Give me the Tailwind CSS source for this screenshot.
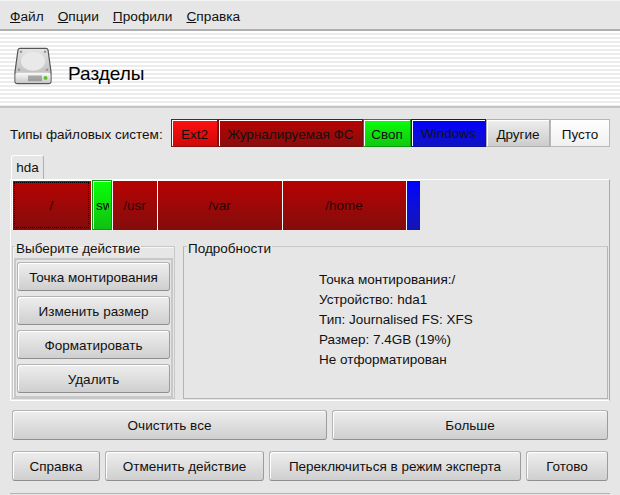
<!doctype html>
<html lang="ru">
<head>
<meta charset="UTF-8"/>
<title>Разделы</title>
<script src="https://cdn.jsdelivr.net/npm/@tailwindcss/browser@4"></script>
</head>
<body class="w-[620px] h-[495px] overflow-hidden bg-[#e6e6e6] text-[13.5px] leading-4 text-[#111] font-['Liberation_Sans',sans-serif]">

<!-- menu -->
<div class="h-[31px] pt-[3px] border-t border-t-[#f4f4f4] border-b-2 border-b-[#aeaeae] flex items-center gap-[14px] pl-[10px] text-[13.7px]">
  <span><u>Ф</u>айл</span>
  <span><u>О</u>пции</span>
  <span><u>П</u>рофили</span>
  <span><u>С</u>правка</span>
</div>

<!-- header -->
<div class="h-[77px] border-b-2 border-[#c4c4c4] flex items-center pl-[14px] bg-[repeating-linear-gradient(to_bottom,#ffffff_0,#ffffff_2px,#ececec_2px,#ececec_4px)]">
  <svg width="38" height="38" viewBox="0 0 38 40" preserveAspectRatio="none" class="mb-[5px]">
    <defs>
      <linearGradient id="hd" x1="0" y1="0" x2="0" y2="1"><stop offset="0" stop-color="#e4e4e4"/><stop offset="1" stop-color="#b4b4b4"/></linearGradient>
      <linearGradient id="fr" x1="0" y1="0" x2="0" y2="1"><stop offset="0" stop-color="#fafafa"/><stop offset="1" stop-color="#c8c8c8"/></linearGradient>
    </defs>
    <path d="M6 1.500H32Q33.500 1.500 34 3L37 26V36Q37 38.500 34.500 38.500H3.500Q1 38.500 1 36V26L4 3Q4.500 1.500 6 1.500Z" fill="url(#hd)" stroke="#555" stroke-width="1.200"/>
    <ellipse cx="19" cy="15" rx="12" ry="10" fill="#e9e9e9"/>
    <circle cx="7" cy="5" r="1.300" fill="#999"/><circle cx="31" cy="5" r="1.300" fill="#999"/>
    <circle cx="5" cy="24" r="1.300" fill="#999"/><circle cx="33" cy="24" r="1.300" fill="#999"/>
    <rect x="1.500" y="27" width="35" height="11" rx="2" fill="url(#fr)"/>
    <path d="M15 30V36M17 30V36M19 30V36M21 30V36M23 30V36M25 30V36M27 30V36" stroke="#666" stroke-width="1"/>
    <circle cx="31.500" cy="32.500" r="2" fill="#5fc02a"/>
  </svg>
  <span class="ml-[16px] mt-[10px] text-[19px] leading-6 text-black">Разделы</span>
</div>

<div class="px-[10px]">
  <!-- legend -->
  <div class="flex items-center h-[28px] mt-[11px]">
    <span class="w-[161px] shrink-0 pt-[4px]">Типы файловых систем:</span>
    <div class="flex h-[28px] text-center leading-[30px]">
      <div class="w-[47px] border border-[#8c1010] shadow-[inset_1px_1px_0_#fff] bg-linear-to-b from-[#ff1010] to-[#d00808]">Ext2</div>
      <div class="w-[145px] border border-[#701010] shadow-[inset_1px_1px_0_#fff] bg-linear-to-b from-[#b80000] to-[#8a0c0c]">Журналируемая ФС</div>
      <div class="w-[48px] border border-[#0c9a0c] shadow-[inset_1px_1px_0_#fff] bg-linear-to-b from-[#08ff08] to-[#10c810]">Своп</div>
      <div class="w-[75px] border border-[#1010a0] shadow-[inset_1px_1px_0_#fff] bg-linear-to-b from-[#0000ff] to-[#1010c4] leading-[28px]">Windows</div>
      <div class="w-[64px] border border-[#b0b0b0] shadow-[inset_1px_1px_0_#fff] bg-linear-to-b from-[#eeeeee] to-[#cccccc]">Другие</div>
      <div class="w-[60px] border border-[#b8b8b8] bg-linear-to-b from-[#ffffff] to-[#f0f0f0]">Пусто</div>
    </div>
  </div>

  <!-- tab -->
  <div class="mt-[8px] ml-px w-[33px] h-[24px] border-t border-l border-white border-r-[#b0b0b0] border-r rounded-t-[3px] text-center leading-[24px]">hda</div>

  <!-- tab panel -->
  <div class="w-[600px] h-[222px] border-t border-l border-b border-white border-r border-r-[#a8a8a8] px-px">
    <div class="flex h-[50px] w-[408px] text-center text-[#2a0505] leading-[52px]">
      <div class="w-[80px] p-[2px] border-r border-white bg-linear-to-b from-[#b80000] to-[#840c0c] shadow-[inset_1px_1px_0_#fff]">
        <div class="h-full border border-dotted border-black leading-[46px]">/</div>
      </div>
      <div class="w-[20px] border border-[#0c9a0c] shadow-[inset_1px_1px_0_#fff] bg-linear-to-b from-[#08ff08] to-[#10c010] text-black text-left pl-[3px] leading-[50px]">
        <div class="w-[13px] overflow-hidden">sw</div>
      </div>
      <div class="w-[45px] shadow-[inset_1px_1px_0_#fff] bg-linear-to-b from-[#b80000] to-[#840c0c]">/usr</div>
      <div class="w-[125px] shadow-[inset_1px_1px_0_#fff] bg-linear-to-b from-[#b80000] to-[#840c0c]">/var</div>
      <div class="w-[124px] shadow-[inset_1px_1px_0_#fff] bg-linear-to-b from-[#b80000] to-[#840c0c]">/home</div>
      <div class="w-[14px] shadow-[inset_1px_1px_0_#fff] bg-linear-to-b from-[#0000ff] to-[#1414b4]"></div>
    </div>

    <div class="flex gap-[8px] mt-[7px]">
      <!-- actions -->
      <fieldset class="w-[163px] h-[162px] border border-[#c8c8c8] shadow-[inset_1px_1px_0_#f6f6f6]">
        <legend class="ml-[2px] px-px pt-[4px] text-[13.5px] leading-[15px]">Выберите действие</legend>
        <div class="mx-px mt-[2px] h-[140px] border-2 border-[#c8c8c8] px-[1px] pt-[2px] flex flex-col gap-[5px]">
          <button class="h-[29px] pt-[2px] shrink-0 rounded-[3px] border border-[#b4b4b4] border-b-[#8e8e8e] border-r-[#9c9c9c] shadow-[inset_1px_1px_0_#fff] bg-linear-to-b from-[#eeeeee] to-[#cfcfcf]">Точка монтирования</button>
          <button class="h-[29px] pt-[2px] shrink-0 rounded-[3px] border border-[#b4b4b4] border-b-[#8e8e8e] border-r-[#9c9c9c] shadow-[inset_1px_1px_0_#fff] bg-linear-to-b from-[#eeeeee] to-[#cfcfcf]">Изменить размер</button>
          <button class="h-[29px] pt-[2px] shrink-0 rounded-[3px] border border-[#b4b4b4] border-b-[#8e8e8e] border-r-[#9c9c9c] shadow-[inset_1px_1px_0_#fff] bg-linear-to-b from-[#eeeeee] to-[#cfcfcf]">Форматировать</button>
          <button class="h-[29px] pt-[2px] shrink-0 rounded-[3px] border border-[#b4b4b4] border-b-[#8e8e8e] border-r-[#9c9c9c] shadow-[inset_1px_1px_0_#fff] bg-linear-to-b from-[#eeeeee] to-[#cfcfcf]">Удалить</button>
        </div>
      </fieldset>

      <!-- details -->
      <fieldset class="w-[425px] h-[162px] border border-[#b4b4b4] border-t-[#c8c8c8]">
        <legend class="ml-[3px] px-px pt-[4px] text-[13.5px] leading-[15px]">Подробности</legend>
        <div class="pl-[135px] pt-[14px] leading-[20px]">
          <p>Точка монтирования:/</p>
          <p>Устройство: hda1</p>
          <p>Тип: Journalised FS: XFS</p>
          <p>Размер: 7.4GB (19%)</p>
          <p>Не отформатирован</p>
        </div>
      </fieldset>
    </div>
  </div>

  <!-- bottom buttons -->
  <div class="flex gap-[5px] mt-[9px] pl-[2px] h-[30px]">
    <button class="w-[315px] pt-[2px] rounded-[3px] border border-[#b4b4b4] border-b-[#8e8e8e] border-r-[#9c9c9c] shadow-[inset_1px_1px_0_#fff] bg-linear-to-b from-[#eeeeee] to-[#cfcfcf]">Очистить все</button>
    <button class="w-[276px] pt-[2px] rounded-[3px] border border-[#b4b4b4] border-b-[#8e8e8e] border-r-[#9c9c9c] shadow-[inset_1px_1px_0_#fff] bg-linear-to-b from-[#eeeeee] to-[#cfcfcf]">Больше</button>
  </div>
  <div class="flex gap-[5px] mt-[11px] pl-[2px] h-[30px]">
    <button class="w-[88px] pt-[2px] rounded-[3px] border border-[#b4b4b4] border-b-[#8e8e8e] border-r-[#9c9c9c] shadow-[inset_1px_1px_0_#fff] bg-linear-to-b from-[#eeeeee] to-[#cfcfcf]">Справка</button>
    <button class="w-[159px] pt-[2px] rounded-[3px] border border-[#b4b4b4] border-b-[#8e8e8e] border-r-[#9c9c9c] shadow-[inset_1px_1px_0_#fff] bg-linear-to-b from-[#eeeeee] to-[#cfcfcf]">Отменить действие</button>
    <button class="w-[252px] pt-[2px] rounded-[3px] border border-[#b4b4b4] border-b-[#8e8e8e] border-r-[#9c9c9c] shadow-[inset_1px_1px_0_#fff] bg-linear-to-b from-[#eeeeee] to-[#cfcfcf]">Переключиться в режим эксперта</button>
    <button class="w-[82px] pt-[2px] rounded-[3px] border border-[#b4b4b4] border-b-[#8e8e8e] border-r-[#9c9c9c] shadow-[inset_1px_1px_0_#fff] bg-linear-to-b from-[#eeeeee] to-[#cfcfcf]">Готово</button>
  </div>
  <div class="mt-[12px] border-t border-[#b4b4b4]"></div>
</div>
</body>
</html>
